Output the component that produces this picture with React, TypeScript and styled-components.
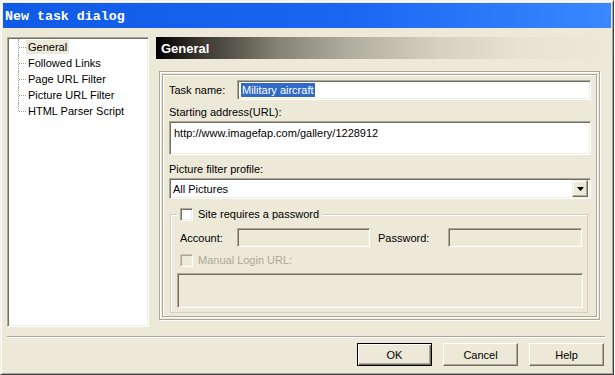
import React from "react";
import styled, { createGlobalStyle, css } from "styled-components";

const GlobalStyle = createGlobalStyle`
  html, body { margin: 0; padding: 0; background: #fff; }
  body {
    font-family: "Liberation Sans", Arial, sans-serif;
    font-size: 11px;
    color: #000;
  }
`;

const sunken = css`
  box-sizing: border-box;
  border: 1px solid;
  border-color: #aca899 #fff #fff #aca899;
  box-shadow: inset 1px 1px #716f64, inset -1px -1px #f1efe2;
`;

const etched = css`
  box-sizing: border-box;
  border: 1px solid #aca899;
  box-shadow: inset 1px 1px #fff, 1px 1px #fff;
`;

const Window = styled.div`
  width: 614px;
  height: 375px;
  box-sizing: border-box;
  background: #ece9d8;
  border: 1px solid;
  border-color: #f4f2e8 #404040 #404040 #f4f2e8;
  box-shadow: inset 1px 1px #fff, inset -1px -1px #aca899;
  padding: 2px;
  display: flex;
  flex-direction: column;
`;

const TitleBar = styled.div`
  flex: none;
  height: 25px;
  display: flex;
  align-items: center;
  padding: 1px 0 0 2px;
  box-sizing: border-box;
  background: linear-gradient(90deg, #0f5be8 0%, #1a65f2 55%, #3a88ff 100%);
  color: #fff;
  font-family: "Liberation Mono", "DejaVu Sans Mono", monospace;
  font-weight: bold;
  font-size: 13.3px;
`;

const Body = styled.div`
  display: flex;
  gap: 7px;
  padding: 9px 0 0 4px;
`;

const Tree = styled.div`
  ${sunken};
  width: 142px;
  height: 290px;
  background: #fff;
  padding: 1px 0 0 10px;
`;

const TreeItem = styled.div<{ $last?: boolean }>`
  position: relative;
  height: 16px;
  display: flex;
  align-items: center;
  padding-left: 8px;

  &::before {
    content: "";
    position: absolute;
    left: 0;
    top: 0;
    height: ${(p) => (p.$last ? "8px" : "16px")};
    border-left: 1px dotted #a0a0a0;
  }
  &::after {
    content: "";
    position: absolute;
    left: 1px;
    top: 8px;
    width: 7px;
    border-top: 1px dotted #a0a0a0;
  }
`;

const TreeLabel = styled.span<{ $selected?: boolean }>`
  padding: 1px 2px;
  background: ${(p) => (p.$selected ? "#ece9d8" : "transparent")};
`;

const RightPanel = styled.div`
  width: 455px;
  display: flex;
  flex-direction: column;
`;

const Header = styled.div`
  height: 22px;
  display: flex;
  align-items: center;
  padding-left: 5px;
  background: linear-gradient(
    90deg,
    #000 0%,
    #3a3830 10%,
    #858373 27%,
    #aeac9c 42%,
    #d4d1c1 62%,
    #e6e3d2 80%,
    #ece9d8 100%
  );
  color: #fff;
  font-weight: bold;
  font-size: 13px;
`;

const Frame = styled.div`
  ${etched};
  margin: 12px 0 0 3px;
  width: 441px;
  height: 249px;
  padding: 2px;
`;

const InnerFrame = styled.div`
  ${etched};
  height: 100%;
  padding: 5px 5px 0 6px;
  display: flex;
  flex-direction: column;
`;

const Row = styled.div<{ $top?: number }>`
  display: flex;
  align-items: center;
  margin-top: ${(p) => p.$top ?? 0}px;
`;

const Label = styled.div<{ $width?: number; $top?: number; $disabled?: boolean }>`
  flex: none;
  line-height: 14px;
  width: ${(p) => (p.$width ? `${p.$width}px` : "auto")};
  margin-top: ${(p) => p.$top ?? 0}px;
  color: ${(p) => (p.$disabled ? "#aca899" : "#000")};
`;

const Field = styled.div<{ $height: number; $width?: number; $disabled?: boolean }>`
  ${sunken};
  height: ${(p) => p.$height}px;
  width: ${(p) => (p.$width ? `${p.$width}px` : "auto")};
  flex: ${(p) => (p.$width ? "none" : "1")};
  background: ${(p) => (p.$disabled ? "#ece9d8" : "#fff")};
  display: flex;
  align-items: center;
  padding-left: 3px;
`;

const Selected = styled.span`
  background: #316ac5;
  color: #fff;
  padding: 1px 1px;
`;

const TextArea = styled.div<{ $height: number; $disabled?: boolean }>`
  ${sunken};
  height: ${(p) => p.$height}px;
  margin-top: 2px;
  padding: 5px 4px;
  background: ${(p) => (p.$disabled ? "#ece9d8" : "#fff")};
`;

const Select = styled.div`
  ${sunken};
  height: 21px;
  margin-top: 2px;
  background: #fff;
  display: flex;
  align-items: center;
  justify-content: space-between;
  padding: 2px 2px 2px 3px;
`;

const DropButton = styled.div`
  box-sizing: border-box;
  width: 16px;
  height: 17px;
  background: #ece9d8;
  border: 1px solid;
  border-color: #f1efe2 #716f64 #716f64 #f1efe2;
  box-shadow: inset -1px -1px #aca899, inset 1px 1px #fff;
  display: flex;
  align-items: center;
  justify-content: center;
`;

const Group = styled.fieldset`
  margin: 8px 0 0 1px;
  width: 418px;
  box-sizing: border-box;
  padding: 0 4px 4px 9px;
  border: 1px solid #d0d0bf;
  box-shadow: inset 1px 1px #fff;
`;

const Legend = styled.legend`
  margin-left: -3px;
  padding: 0 3px;
  background: #ece9d8;
  display: flex;
  align-items: center;
  gap: 5px;
  line-height: 14px;
`;

const Check = styled.span<{ $disabled?: boolean }>`
  ${sunken};
  display: inline-block;
  width: 13px;
  height: 13px;
  background: ${(p) => (p.$disabled ? "#ece9d8" : "#fff")};
  ${(p) =>
    p.$disabled &&
    css`
      border-color: #cac6b4 #fff #fff #cac6b4;
      box-shadow: inset 1px 1px #aca899, inset -1px -1px #f1efe2;
    `}
`;

const CheckRow = styled.div<{ $top?: number }>`
  display: flex;
  align-items: center;
  gap: 5px;
  margin-top: ${(p) => p.$top ?? 0}px;
`;

const Separator = styled.div`
  margin: 9px 6px 0 4px;
  border-top: 1px solid #aca899;
  border-bottom: 1px solid #fff;
`;

const ButtonRow = styled.div`
  display: flex;
  justify-content: flex-end;
  gap: 11px;
  margin-top: 5px;
  padding-right: 7px;
`;

const Button = styled.button<{ $default?: boolean }>`
  width: 75px;
  height: 23px;
  box-sizing: border-box;
  background: #ece9d8;
  font-family: "Liberation Sans", Arial, sans-serif;
  font-size: 11px;
  color: #000;
  padding: 0;
  border: 1px solid;
  border-color: #fff #716f64 #716f64 #fff;
  box-shadow: inset -1px -1px #aca899;
  ${(p) =>
    p.$default &&
    css`
      border-color: #000;
      box-shadow: inset 1px 1px #fff, inset -1px -1px #716f64, inset -2px -2px #aca899;
    `}
`;

const treeItems = [
  "General",
  "Followed Links",
  "Page URL Filter",
  "Picture URL Filter",
  "HTML Parser Script",
];

export default function App() {
  return (
    <>
      <GlobalStyle />
      <Window>
        <TitleBar>New task dialog</TitleBar>
        <Body>
          <Tree>
            {treeItems.map((t, i) => (
              <TreeItem key={t} $last={i === treeItems.length - 1}>
                <TreeLabel $selected={i === 0}>{t}</TreeLabel>
              </TreeItem>
            ))}
          </Tree>
          <RightPanel>
            <Header>General</Header>
            <Frame>
              <InnerFrame>
                <Row>
                  <Label $width={68}>Task name:</Label>
                  <Field $height={20}>
                    <Selected>Military aircraft</Selected>
                  </Field>
                </Row>
                <Label $top={5}>Starting address(URL):</Label>
                <TextArea $height={34}>http://www.imagefap.com/gallery/1228912</TextArea>
                <Label $top={7}>Picture filter profile:</Label>
                <Select>
                  <span>All Pictures</span>
                  <DropButton>
                    <svg width="7" height="4" viewBox="0 0 7 4">
                      <path d="M0 0h7L3.5 4z" fill="#000" />
                    </svg>
                  </DropButton>
                </Select>
                <Group>
                  <Legend>
                    <Check />
                    <span>Site requires a password</span>
                  </Legend>
                  <Row $top={7}>
                    <Label $width={57}>Account:</Label>
                    <Field $height={19} $width={133} $disabled />
                    <Label $width={70} style={{ marginLeft: 8 }}>
                      Password:
                    </Label>
                    <Field $height={19} $width={134} $disabled />
                  </Row>
                  <CheckRow $top={6}>
                    <Check $disabled />
                    <Label $disabled>Manual Login URL:</Label>
                  </CheckRow>
                  <TextArea $height={35} $disabled style={{ marginTop: 6, marginLeft: -3 }} />
                </Group>
              </InnerFrame>
            </Frame>
          </RightPanel>
        </Body>
        <Separator />
        <ButtonRow>
          <Button $default>OK</Button>
          <Button>Cancel</Button>
          <Button>Help</Button>
        </ButtonRow>
      </Window>
    </>
  );
}
